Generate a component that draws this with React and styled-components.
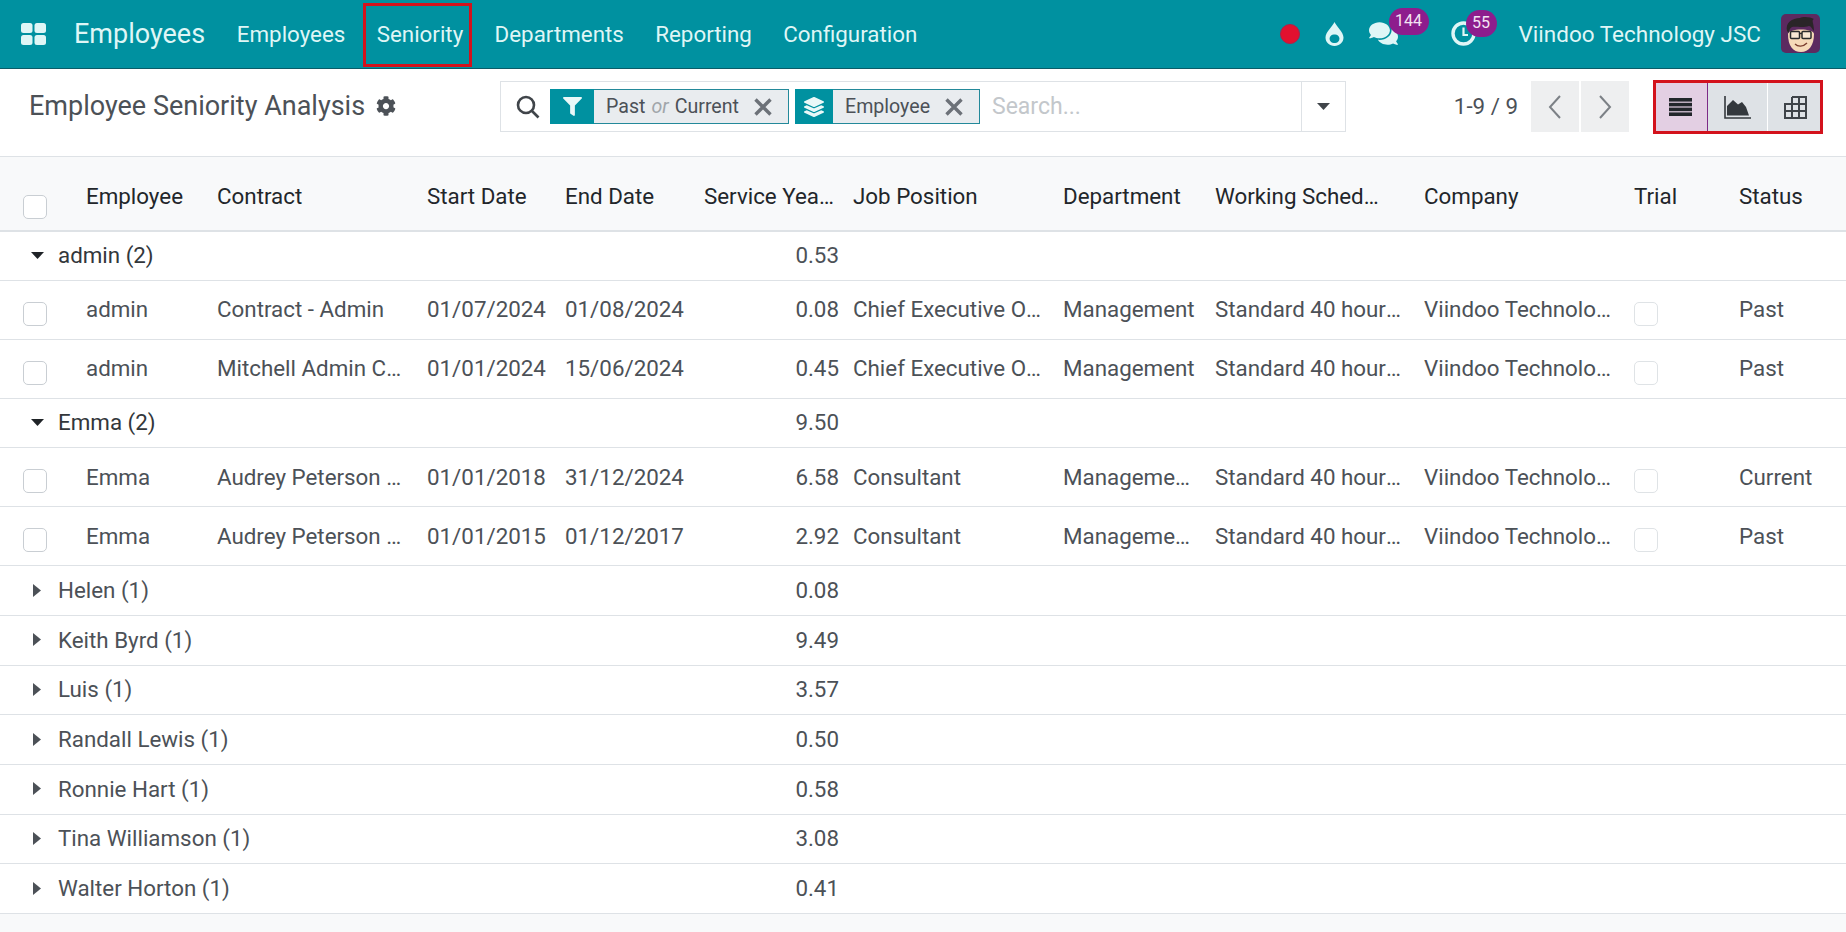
import React from 'react';
import styled, { createGlobalStyle } from 'styled-components';
import { FaCog, FaFilter, FaLayerGroup, FaComments } from 'react-icons/fa';

const TEAL = '#0091a0';

const GlobalStyle = createGlobalStyle`
  html, body {
    margin: 0;
    padding: 0;
    background: #f8f9fa;
    font-family: Roboto, "Noto Sans", sans-serif;
    overflow: hidden;
  }
  *, *::before, *::after { box-sizing: border-box; }
`;

const navItems = ['Employees', 'Seniority', 'Departments', 'Reporting', 'Configuration'];

const columns = [
  { label: '', width: 76 },
  { label: 'Employee', width: 131 },
  { label: 'Contract', width: 210 },
  { label: 'Start Date', width: 138 },
  { label: 'End Date', width: 139 },
  { label: 'Service Years', width: 149, pad: 8 },
  { label: 'Job Position', width: 210 },
  { label: 'Department', width: 152 },
  { label: 'Working Schedule', width: 209, pad: 25 },
  { label: 'Company', width: 210 },
  { label: 'Trial', width: 105 },
  { label: 'Status', width: 117 },
];

const groups = [
  {
    name: 'admin (2)', total: '0.53', open: true,
    rows: [
      ['admin', 'Contract - Admin', '01/07/2024', '01/08/2024', '0.08', 'Chief Executive Officer', 'Management', 'Past'],
      ['admin', 'Mitchell Admin Contract', '01/01/2024', '15/06/2024', '0.45', 'Chief Executive Officer', 'Management', 'Past'],
    ],
  },
  {
    name: 'Emma (2)', total: '9.50', open: true,
    rows: [
      ['Emma', 'Audrey Peterson Contract', '01/01/2018', '31/12/2024', '6.58', 'Consultant', 'Management Team', 'Current'],
      ['Emma', 'Audrey Peterson Contract', '01/01/2015', '01/12/2017', '2.92', 'Consultant', 'Management Team', 'Past'],
    ],
  },
  { name: 'Helen (1)', total: '0.08' },
  { name: 'Keith Byrd (1)', total: '9.49' },
  { name: 'Luis (1)', total: '3.57' },
  { name: 'Randall Lewis (1)', total: '0.50' },
  { name: 'Ronnie Hart (1)', total: '0.58' },
  { name: 'Tina Williamson (1)', total: '3.08' },
  { name: 'Walter Horton (1)', total: '0.41' },
];

const Page = styled.div`
  min-height: 100vh;
  display: flex;
  flex-direction: column;
  background: #f8f9fa;
`;

/* top bar */
const NavBar = styled.header`
  height: 69px;
  display: flex;
  align-items: center;
  padding: 0 26px 1px 21px;
  background: ${TEAL};
  border-bottom: 1px solid #0a5c68;
  color: #dff6f6;
`;

const Brand = styled.span`
  margin-left: 28px;
  margin-right: 16px;
  font-size: 27px;
`;

const NavItem = styled.a`
  position: relative;
  padding: 0 15.7px;
  font-size: 22.35px;
  ${(p) => p.$marked && `
    &::after {
      content: '';
      position: absolute;
      left: 1.5px;
      right: 7px;
      top: -18px;
      height: 64px;
      border: 3px solid #d3121c;
    }
  `}
`;

const NavRight = styled.div`
  margin-left: auto;
  display: flex;
  align-items: center;
`;

const RecordDot = styled.span`
  width: 20px;
  height: 20px;
  border-radius: 50%;
  background: #e2112f;
  border: 1px solid #b11f48;
  margin-right: 25px;
`;

const IconSlot = styled.span`
  position: relative;
  display: flex;
  align-items: center;
  margin-right: ${(p) => p.$gap}px;
`;

const Badge = styled.span`
  position: absolute;
  left: ${(p) => p.$left}px;
  top: -11px;
  height: 27px;
  min-width: ${(p) => p.$w}px;
  border-radius: 14px;
  background: #8d1d8d;
  color: #f3e4f3;
  font-size: 16px;
  line-height: 25px;
  text-align: center;
`;

const Company = styled.span`
  font-size: 22.5px;
  margin-right: 20px;
`;

const Avatar = styled.svg`
  width: 39px;
  height: 39px;
  display: block;
`;

/* control panel */
const ControlPanel = styled.div`
  height: 88px;
  display: flex;
  align-items: flex-start;
  padding: 12px 23px 0 29px;
  background: #fff;
  border-bottom: 1px solid #dee2e6;
`;

const TitleBox = styled.div`
  width: 471px;
  height: 49px;
  display: flex;
  align-items: center;
  gap: 11px;
  color: #4c5157;
  font-size: 27px;
`;

const SearchBox = styled.div`
  width: 846px;
  height: 51px;
  display: flex;
  align-items: center;
  border: 1px solid #dee2e6;
  padding-left: 15px;
`;

const Facet = styled.div`
  height: 35px;
  display: flex;
  align-items: stretch;
  margin-right: 6px;
  border: 1px solid #23899a;
  background: #e9ecef;
  color: #4c5157;
  font-size: 19.6px;
`;

const FacetIcon = styled.span`
  width: ${(p) => p.$w}px;
  margin: -1px 0 -1px -1px;
  display: flex;
  align-items: center;
  justify-content: center;
  background: ${TEAL};
  color: #eaf8f8;
`;

const FacetValue = styled.span`
  display: flex;
  align-items: center;
  padding: 0 16px 0 12px;
  gap: 14px;
  width: ${(p) => p.$w}px;
  justify-content: space-between;
`;

const OrWord = styled.em`
  color: #a0a5aa;
  margin: 0 6px;
`;

const SearchInput = styled.span`
  flex: 1;
  padding-left: 6px;
  color: #c3c7cb;
  font-size: 23px;
`;

const DropToggle = styled.span`
  width: 44px;
  align-self: stretch;
  display: flex;
  align-items: center;
  justify-content: center;
  border-left: 1px solid #dee2e6;
`;

const Pager = styled.div`
  margin-left: auto;
  height: 51px;
  display: flex;
  align-items: center;
  color: #4c5157;
  font-size: 22.35px;
`;

const PagerText = styled.span`
  margin-right: 13px;
  margin-bottom: 2px;
`;

const PagerBtn = styled.span`
  width: 48px;
  height: 51px;
  margin-left: ${(p) => (p.$next ? 2 : 0)}px;
  display: flex;
  align-items: center;
  justify-content: center;
  background: #eeeff0;
`;

const Views = styled.div`
  margin-left: 24px;
  margin-top: -1px;
  height: 54px;
  display: flex;
  border: 3px solid #d3121c;
`;

const ViewBtn = styled.span`
  width: ${(p) => p.$w}px;
  display: flex;
  align-items: center;
  justify-content: center;
  background: ${(p) => (p.$active ? '#e3cfe3' : '#dee2e6')};
  border-right: ${(p) => (p.$line ? `1px solid ${p.$line}` : 'none')};
`;

/* list */
const Table = styled.table`
  width: 1846px;
  table-layout: fixed;
  border-collapse: separate;
  border-spacing: 0;
  font-size: 22.35px;
  color: #4c5157;
`;

const HeadCell = styled.th`
  height: 75px;
  padding: 5px ${(p) => p.$pad || 5}px 0 10px;
  background: #f8f9fa;
  border-bottom: 2px solid #dee2e6;
  color: #22262a;
  font-weight: 400;
  text-align: left;
  white-space: nowrap;
  overflow: hidden;
  text-overflow: ellipsis;
  vertical-align: middle;
  line-height: 26px;
`;

const Cell = styled.td`
  height: 59px;
  padding: 0 ${(p) => (p.$num ? 4 : 5)}px 1px 10px;
  background: #fff;
  border-bottom: 1px solid #dee2e6;
  white-space: nowrap;
  overflow: hidden;
  text-overflow: ellipsis;
  text-align: ${(p) => (p.$num ? 'right' : 'left')};
`;

const GroupCell = styled(Cell)`
  height: ${(p) => (p.$first ? 48.5 : 49.7)}px;
  color: ${(p) => (p.$open ? '#33373b' : '#4c5157')};
`;

const GroupLabel = styled.span`
  display: flex;
  align-items: center;
  height: 26px;
`;

const CaretBox = styled.span`
  width: 27px;
  margin-left: 21px;
  flex: none;
  display: flex;
  align-items: center;
  padding-left: ${(p) => (p.$open ? 0 : 2)}px;
`;

const CheckBox = styled.span`
  display: block;
  width: 24px;
  height: 24px;
  margin-left: ${(p) => p.$left || 0}px;
  margin-top: ${(p) => p.$top}px;
  border: 1px solid ${(p) => (p.$light ? '#dfe3e6' : '#c9ced3')};
  border-radius: 5px;
  background: #fff;
`;

const Footer = styled.div`
  flex: 1;
  background: #f8f9fa;
`;

const AppsIcon = () => (
  <svg width="25" height="22" viewBox="0 0 25 22" fill="#dff6f6">
    <rect x="0" y="0" width="11.5" height="10" rx="2.5" />
    <rect x="13.5" y="0" width="11.5" height="10" rx="2.5" />
    <rect x="0" y="12" width="11.5" height="10" rx="2.5" />
    <rect x="13.5" y="12" width="11.5" height="10" rx="2.5" />
  </svg>
);

const DropIcon = () => (
  <svg width="19" height="24" viewBox="0 0 19 24">
    <path
      fill="#dff6f6"
      fillRule="evenodd"
      d="M9.5 0C11 4 18.5 10 18.5 15.5C18.5 20.4 14.5 24 9.5 24C4.5 24 .5 20.4 .5 15.5C.5 10 8 4 9.5 0ZM9.5 12.5A4.3 4.3 0 1 0 9.5 21A4.3 4.3 0 1 0 9.5 12.5Z"
    />
  </svg>
);

const ClockIcon = () => (
  <svg width="25" height="25" viewBox="0 0 25 25" fill="none" stroke="#dff6f6">
    <circle cx="12.5" cy="12.5" r="10.5" strokeWidth="3.4" />
    <path d="M12.5 6.5V14H17" strokeWidth="2.2" />
  </svg>
);

const SearchIcon = () => (
  <svg width="24" height="24" viewBox="0 0 24 24" fill="none" stroke="#40454a" strokeWidth="2.6" style={{ marginRight: 10, flex: 'none' }}>
    <circle cx="10" cy="10" r="8" />
    <path d="M16 16L22.5 22.5" />
  </svg>
);

const CloseIcon = () => (
  <svg width="18" height="18" viewBox="0 0 18 18" stroke="#6c7178" strokeWidth="3.4" style={{ flex: 'none' }}>
    <path d="M1.5 1.5L16.5 16.5M16.5 1.5L1.5 16.5" />
  </svg>
);

const Chevron = ({ flip }) => (
  <svg width="14" height="24" viewBox="0 0 14 24" fill="none" stroke="#7c8186" strokeWidth="2">
    <path d={flip ? 'M2 1L12 12L2 23' : 'M12 1L2 12L12 23'} />
  </svg>
);

const Caret = ({ open, color }) =>
  open ? (
    <svg width="13" height="7" viewBox="0 0 13 7" fill={color}><path d="M0 0H13L6.5 7Z" /></svg>
  ) : (
    <svg width="8" height="13" viewBox="0 0 8 13" fill={color}><path d="M0 0L8 6.5L0 13Z" /></svg>
  );

const ListIcon = () => (
  <svg width="23" height="18" viewBox="0 0 23 18" fill="#22262b" style={{ marginRight: 2 }}>
    <rect y="0" width="23" height="3.6" />
    <rect y="4.8" width="23" height="3.6" />
    <rect y="9.6" width="23" height="3.6" />
    <rect y="14.4" width="23" height="3.6" />
  </svg>
);

const ChartIcon = () => (
  <svg width="27" height="23" viewBox="0 0 27 23">
    <path fill="none" stroke="#33383d" strokeWidth="1.6" d="M1 0V22H27" />
    <path fill="#33383d" d="M3 19.5V10L9 4L14 8.5L18 6L22 11L25 19.5Z" />
  </svg>
);

const PivotIcon = () => (
  <svg width="23" height="23" viewBox="0 0 23 23" fill="none" stroke="#3f4449" strokeWidth="2" style={{ marginLeft: 2 }}>
    <path d="M8 1H22V22H1V8H22M8 1V22M1 15H22M15 1V22" />
  </svg>
);

const AvatarFace = () => (
  <Avatar viewBox="0 0 39 39">
    <rect width="39" height="39" rx="5" fill="#5c2a60" />
    <path d="M7 20C7 32 12 38 20 38C28 38 33 31 33 20C33 14 7 14 7 20Z" fill="#f6d9b8" />
    <path d="M6 17C4 9 11 4 19 4C22 2 30 3 33 5C30 6 33 9 33 17C31 15 30 12 28 12C22 14 14 12 11 13C9 14 8 16 8 19Z" fill="#2a2528" />
    <g fill="#fff" fillOpacity="0.4" stroke="#2b2b2b" strokeWidth="1.5">
      <rect x="9.5" y="17.5" width="9" height="7" rx="1" />
      <rect x="21" y="17.5" width="9" height="7" rx="1" />
    </g>
    <path d="M18.5 19.5H21" stroke="#2b2b2b" strokeWidth="1.3" />
    <path d="M14 30C17 33 22 33 26 29" fill="none" stroke="#7a3b2c" strokeWidth="1.3" />
  </Avatar>
);

function GroupRow({ group, first }) {
  const color = group.open ? '#1f2327' : '#4c5157';
  return (
    <tr>
      <GroupCell colSpan={5} $open={group.open} $first={first}>
        <GroupLabel>
          <CaretBox $open={group.open}>
            <Caret open={group.open} color={color} />
          </CaretBox>
          {group.name}
        </GroupLabel>
      </GroupCell>
      <GroupCell $num $first={first}>{group.total}</GroupCell>
      <GroupCell colSpan={6} $first={first} />
    </tr>
  );
}

function RecordRow({ row }) {
  const [employee, contract, start, end, years, job, department, status] = row;
  return (
    <tr>
      <Cell><CheckBox $left={13} $top={9} /></Cell>
      <Cell>{employee}</Cell>
      <Cell>{contract}</Cell>
      <Cell>{start}</Cell>
      <Cell>{end}</Cell>
      <Cell $num>{years}</Cell>
      <Cell>{job}</Cell>
      <Cell>{department}</Cell>
      <Cell>Standard 40 hours/week</Cell>
      <Cell>Viindoo Technology JSC</Cell>
      <Cell><CheckBox $light $top={9} /></Cell>
      <Cell>{status}</Cell>
    </tr>
  );
}

export default function App() {
  return (
    <Page>
      <GlobalStyle />
      <NavBar>
        <AppsIcon />
        <Brand>Employees</Brand>
        {navItems.map((item) => (
          <NavItem key={item} $marked={item === 'Seniority'}>{item}</NavItem>
        ))}
        <NavRight>
          <RecordDot />
          <IconSlot $gap={25}><DropIcon /></IconSlot>
          <IconSlot $gap={53}>
            <FaComments size={29} color="#dff6f6" />
            <Badge $left={20} $w={40}>144</Badge>
          </IconSlot>
          <IconSlot $gap={43}>
            <ClockIcon />
            <Badge $left={15} $w={31}>55</Badge>
          </IconSlot>
          <Company>Viindoo Technology JSC</Company>
          <AvatarFace />
        </NavRight>
      </NavBar>

      <ControlPanel>
        <TitleBox>
          Employee Seniority Analysis
          <FaCog size={20} color="#4c5157" />
        </TitleBox>
        <SearchBox>
          <SearchIcon />
          <Facet>
            <FacetIcon $w={44}><FaFilter size={19} /></FacetIcon>
            <FacetValue $w={194}>
              <span>Past<OrWord>or</OrWord>Current</span>
              <CloseIcon />
            </FacetValue>
          </Facet>
          <Facet>
            <FacetIcon $w={38}><FaLayerGroup size={20} /></FacetIcon>
            <FacetValue $w={146}>
              <span>Employee</span>
              <CloseIcon />
            </FacetValue>
          </Facet>
          <SearchInput>Search...</SearchInput>
          <DropToggle>
            <Caret open color="#40454a" />
          </DropToggle>
        </SearchBox>
        <Pager>
          <PagerText>1-9 / 9</PagerText>
          <PagerBtn><Chevron /></PagerBtn>
          <PagerBtn $next><Chevron flip /></PagerBtn>
        </Pager>
        <Views>
          <ViewBtn $w={52} $active $line="#7d2a86"><ListIcon /></ViewBtn>
          <ViewBtn $w={60} $line="#fff"><ChartIcon /></ViewBtn>
          <ViewBtn $w={52}><PivotIcon /></ViewBtn>
        </Views>
      </ControlPanel>

      <Table>
        <colgroup>
          {columns.map((col) => <col key={col.label} width={col.width} />)}
        </colgroup>
        <thead>
          <tr>
            {columns.map((col) => (
              <HeadCell key={col.label} $pad={col.pad}>
                {col.label || <CheckBox $left={13} $top={22} />}
              </HeadCell>
            ))}
          </tr>
        </thead>
        <tbody>
          {groups.map((group, i) => (
            <React.Fragment key={group.name}>
              <GroupRow group={group} first={i === 0} />
              {(group.rows || []).map((row) => (
                <RecordRow key={row[1] + row[2]} row={row} />
              ))}
            </React.Fragment>
          ))}
        </tbody>
      </Table>
      <Footer />
    </Page>
  );
}
